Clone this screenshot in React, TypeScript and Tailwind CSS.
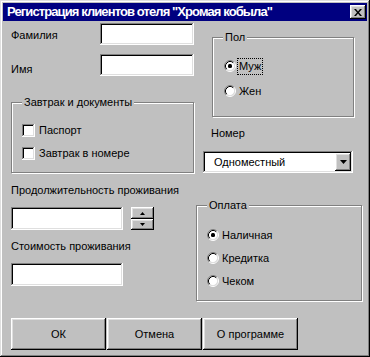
const raised =
  'shadow-[inset_-1px_-1px_0_#000,inset_1px_1px_0_#fff,inset_-2px_-2px_0_#808080,inset_2px_2px_0_#dfdfdf]';
const sunken =
  'shadow-[inset_-1px_-1px_0_#fff,inset_1px_1px_0_#808080,inset_-2px_-2px_0_#dfdfdf,inset_2px_2px_0_#000]';

function Radio({ checked }: { checked?: boolean }) {
  return (
    <svg width="12" height="12" viewBox="0 0 12 12" className="shrink-0">
      <circle cx="6" cy="6" r="4.5" fill="#fff" />
      <path d="M2.11 9.89 A5.5 5.5 0 0 1 9.89 2.11" stroke="#808080" fill="none" />
      <path d="M9.89 2.11 A5.5 5.5 0 0 1 2.11 9.89" stroke="#fff" fill="none" />
      <path d="M2.82 9.18 A4.5 4.5 0 0 1 9.18 2.82" stroke="#000" fill="none" />
      <path d="M9.18 2.82 A4.5 4.5 0 0 1 2.82 9.18" stroke="#dfdfdf" fill="none" />
      {checked && <rect x="4" y="4" width="4" height="4" rx="1.5" fill="#000" />}
    </svg>
  );
}

function RadioRow({ label, checked, focused }: { label: string; checked?: boolean; focused?: boolean }) {
  return (
    <div className="flex items-center h-[16px]">
      <Radio checked={checked} />
      <span
        className={
          focused
            ? 'ml-[2px] px-[1px] leading-[15px] outline-1 outline-dotted outline-black'
            : 'ml-[3px] leading-[15px]'
        }
      >
        {label}
      </span>
    </div>
  );
}

function CheckRow({ label }: { label: string }) {
  return (
    <div className="flex items-center h-[13px]">
      <span className={`w-[13px] h-[13px] bg-white shrink-0 ${sunken}`} />
      <span className="ml-[4px]">{label}</span>
    </div>
  );
}

function Group({ title, className, children }: { title: string; className: string; children: React.ReactNode }) {
  return (
    <div
      className={`relative border border-[#808080] shadow-[inset_1px_1px_0_#fff,1px_1px_0_#fff] ${className}`}
    >
      <span className="absolute -top-[8px] left-[10px] px-[2px] bg-[#c0c0c0] leading-[15px]">{title}</span>
      {children}
    </div>
  );
}

function Field({ className }: { className: string }) {
  return <div className={`bg-white ${sunken} ${className}`} />;
}

export default function App() {
  return (
    <div
      className="w-[370px] h-[357px] bg-[#c0c0c0] text-black text-[11px] leading-[13px] shadow-[inset_-1px_-1px_0_#000,inset_1px_1px_0_#dfdfdf,inset_-2px_-2px_0_#808080,inset_2px_2px_0_#fff] pt-[3px] px-[3px]"
      style={{ fontFamily: '"Liberation Sans", Arial, sans-serif' }}
    >
      {/* Title bar */}
      <div className="h-[18px] bg-[#000080] flex items-start justify-between">
        <span className="ml-[4px] mt-[1px] text-white font-bold text-[13px] tracking-[-0.9px] leading-[16px] whitespace-nowrap">
          Регистрация клиентов отеля "Хромая кобыла"
        </span>
        <button className={`mt-[2px] mr-[1px] w-[16px] h-[14px] bg-[#c0c0c0] flex items-center justify-center ${raised}`}>
          <svg width="8" height="7" viewBox="0 0 8 7">
            <path d="M0 0h2l2 2.5L6 0h2L5 3.5 8 7H6L4 4.5 2 7H0l3-3.5z" fill="#000" />
          </svg>
        </button>
      </div>

      {/* Body */}
      <div className="pl-[8px]">
        <div className="flex gap-[2px]">
          {/* Left column */}
          <div className="w-[183px] flex flex-col">
            <div className="mt-[2px] flex items-center justify-between">
              <span className="mt-[6px] self-start">Фамилия</span>
              <Field className="w-[94px] h-[22px]" />
            </div>
            <div className="mt-[9px] flex items-center justify-between">
              <span className="mt-[9px] self-start">Имя</span>
              <Field className="w-[94px] h-[22px]" />
            </div>
            <Group title="Завтрак и документы" className="mt-[26px] h-[71px] flex flex-col gap-[10px] pt-[21px] pl-[10px]">
              <CheckRow label="Паспорт" />
              <CheckRow label="Завтрак в номере" />
            </Group>
            <span className="mt-[11px]">Продолжительность проживания</span>
            <div className="mt-[10px] flex items-center gap-[8px]">
              <Field className="w-[112px] h-[23px]" />
              <div className="w-[23px] h-[23px] flex flex-col">
                <button className={`h-[12px] bg-[#c0c0c0] flex items-center justify-center ${raised}`}>
                  <svg width="5" height="3" viewBox="0 0 5 3">
                    <path d="M2.5 0L5 3H0z" fill="#000" />
                  </svg>
                </button>
                <button className={`h-[11px] bg-[#c0c0c0] flex items-center justify-center ${raised}`}>
                  <svg width="5" height="3" viewBox="0 0 5 3">
                    <path d="M0 0h5L2.5 3z" fill="#000" />
                  </svg>
                </button>
              </div>
            </div>
            <span className="mt-[10px]">Стоимость проживания</span>
            <Field className="mt-[10px] w-[112px] h-[23px]" />
          </div>

          {/* Right column */}
          <div className="w-[166px] flex flex-col">
            <Group title="Пол" className="ml-[16px] mt-[16px] w-[142px] h-[80px] flex flex-col gap-[9px] pt-[20px] pl-[11px]">
              <RadioRow label="Муж" checked focused />
              <RadioRow label="Жен" />
            </Group>
            <span className="ml-[15px] mt-[10px]">Номер</span>
            <div className={`ml-[7px] mt-[11px] w-[150px] h-[22px] bg-white flex items-center justify-between ${sunken}`}>
              <span className="ml-[11px]">Одноместный</span>
              <button className={`mr-[2px] w-[16px] h-[18px] bg-[#c0c0c0] flex items-center justify-center ${raised}`}>
                <svg width="7" height="4" viewBox="0 0 7 4">
                  <path d="M0 0h7L3.5 4z" fill="#000" />
                </svg>
              </button>
            </div>
            <Group title="Оплата" className="mt-[32px] w-[166px] h-[96px] flex flex-col gap-[7px] pt-[21px] pl-[10px]">
              <RadioRow label="Наличная" checked />
              <RadioRow label="Кредитка" />
              <RadioRow label="Чеком" />
            </Group>
          </div>
        </div>

        {/* Buttons */}
        <div className="mt-[17px] flex gap-[1px]">
          <button className={`w-[95px] h-[32px] bg-[#c0c0c0] ${raised}`}>ОК</button>
          <button className={`w-[95px] h-[32px] bg-[#c0c0c0] ${raised}`}>Отмена</button>
          <button className={`w-[95px] h-[32px] bg-[#c0c0c0] ${raised}`}>О программе</button>
        </div>
      </div>
    </div>
  );
}
